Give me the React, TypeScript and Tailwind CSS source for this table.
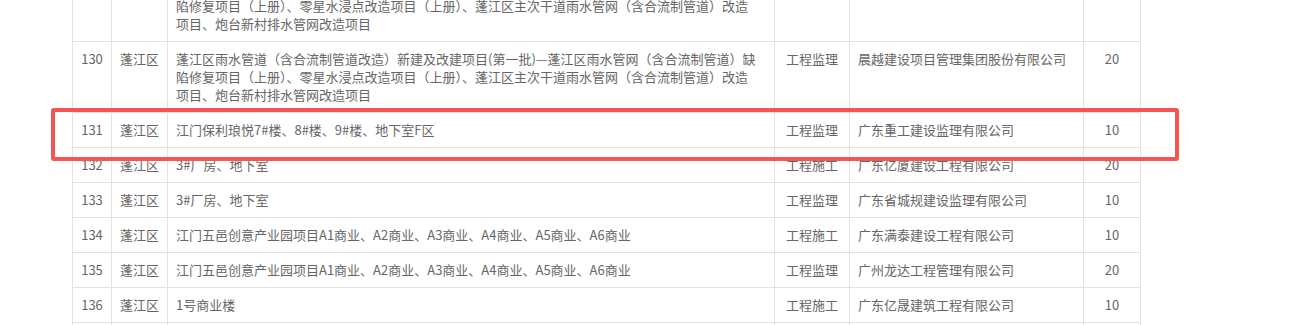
import React from 'react';

interface Row {
  no: number;
  area: string;
  project: string[];
  kind: string;
  company: string;
  score: number;
}

const longProject = [
  '蓬江区雨水管道（含合流制管道改造）新建及改建项目(第一批)—蓬江区雨水管网（含合流制管道）缺',
  '陷修复项目（上册）、零星水浸点改造项目（上册）、蓬江区主次干道雨水管网（含合流制管道）改造',
  '项目、炮台新村排水管网改造项目',
];

const rows: Row[] = [
  { no: 129, area: '蓬江区', project: longProject, kind: '工程施工', company: '广东华邦建设工程有限公司', score: 10 },
  { no: 130, area: '蓬江区', project: longProject, kind: '工程监理', company: '晨越建设项目管理集团股份有限公司', score: 20 },
  { no: 131, area: '蓬江区', project: ['江门保利琅悦7#楼、8#楼、9#楼、地下室F区'], kind: '工程监理', company: '广东重工建设监理有限公司', score: 10 },
  { no: 132, area: '蓬江区', project: ['3#厂房、地下室'], kind: '工程施工', company: '广东亿厦建设工程有限公司', score: 20 },
  { no: 133, area: '蓬江区', project: ['3#厂房、地下室'], kind: '工程监理', company: '广东省城规建设监理有限公司', score: 10 },
  { no: 134, area: '蓬江区', project: ['江门五邑创意产业园项目A1商业、A2商业、A3商业、A4商业、A5商业、A6商业'], kind: '工程施工', company: '广东满泰建设工程有限公司', score: 10 },
  { no: 135, area: '蓬江区', project: ['江门五邑创意产业园项目A1商业、A2商业、A3商业、A4商业、A5商业、A6商业'], kind: '工程监理', company: '广州龙达工程管理有限公司', score: 20 },
  { no: 136, area: '蓬江区', project: ['1号商业楼'], kind: '工程施工', company: '广东亿晟建筑工程有限公司', score: 10 },
  { no: 137, area: '蓬江区', project: ['1号商业楼'], kind: '工程监理', company: '广东建科建设咨询有限公司', score: 10 },
];

const cell = 'border border-[#e2e2e2] px-2 py-2 align-top leading-[18px]';

export default function App() {
  return (
    <div
      className="relative h-[325px] overflow-hidden bg-white text-[13px] text-[#666]"
      style={{ fontFamily: '"Noto Sans CJK SC", "Noto Sans", sans-serif' }}
    >
      <table className="ml-[72px] -mt-[30px] w-[1068px] table-fixed border-collapse">
        <colgroup>
          <col className="w-[39px]" />
          <col className="w-[56px]" />
          <col className="w-[607px]" />
          <col className="w-[75px]" />
          <col className="w-[234px]" />
          <col className="w-[57px]" />
        </colgroup>
        <tbody>
          {rows.map((r) => (
            <tr key={r.no}>
              <td className={`${cell} text-center`}>{r.no}</td>
              <td className={`${cell} text-center`}>{r.area}</td>
              <td className={cell}>
                {r.project.map((line, i) => (
                  <span key={i} className="block whitespace-nowrap">{line}</span>
                ))}
              </td>
              <td className={`${cell} text-center`}>{r.kind}</td>
              <td className={cell}>{r.company}</td>
              <td className={`${cell} text-center`}>{r.score}</td>
            </tr>
          ))}
        </tbody>
      </table>

      {/* highlight annotation */}
      <div className="pointer-events-none absolute left-[51px] top-[108px] h-[53px] w-[1128px] rounded-[3px] border-4 border-[#f75454]" />
    </div>
  );
}
